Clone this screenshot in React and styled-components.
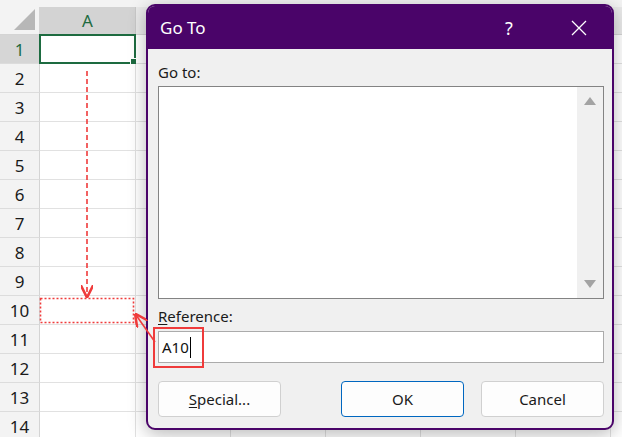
import React from "react";
import styled, { createGlobalStyle } from "styled-components";

const GlobalStyle = createGlobalStyle`
  html, body {
    margin: 0;
    padding: 0;
    background: #ffffff;
    overflow: hidden;
  }
  * {
    box-sizing: border-box;
  }
`;

const Page = styled.div`
  position: relative;
  width: 622px;
  height: 437px;
  overflow: hidden;
  background: #ffffff;
  font-family: "Noto Sans", "Open Sans", sans-serif;
`;

const TopStrip = styled.div`
  height: 7px;
  background: #f3f3f3;
`;

const Sheet = styled.div`
  display: grid;
  grid-template-columns: 40px 96px repeat(6, 95px);
  grid-template-rows: 28px repeat(14, 29px);
`;

const Corner = styled.div`
  position: relative;
  background: #f3f3f3;
  border-right: 1px solid #d4d4d4;
  border-bottom: 1px solid #d4d4d4;
  &::after {
    content: "";
    position: absolute;
    right: 4px;
    bottom: 4px;
    width: 0;
    height: 0;
    border-left: 21px solid transparent;
    border-bottom: 21px solid #b7b7b7;
  }
`;

const ColHead = styled.div`
  display: flex;
  align-items: center;
  justify-content: center;
  background: ${({ active }) => (active ? "#d3d3d3" : "#e9e9e9")};
  color: ${({ active }) => (active ? "#1d6b40" : "#333")};
  border-right: 1px solid #c8c8c8;
  border-bottom: 1px solid ${({ active }) => (active ? "#1d6b40" : "#d4d4d4")};
  font-size: 17px;
`;

const RowHead = styled.div`
  display: flex;
  align-items: center;
  justify-content: center;
  background: ${({ active }) => (active ? "#d6d6d6" : "#f3f3f3")};
  color: ${({ active }) => (active ? "#1d6b40" : "#1a1a1a")};
  border-right: 1px solid ${({ active }) => (active ? "#1d6b40" : "#d4d4d4")};
  border-bottom: 1px solid #dcdcdc;
  font-size: 17px;
`;

const Cell = styled.div`
  position: relative;
  background: #ffffff;
  border-right: 1px solid #e1e1e1;
  border-bottom: 1px solid #e1e1e1;
  ${({ selected }) =>
    selected &&
    `
    border: 2px solid #1d6b40;
    margin: -1px 0 0 -1px;
    &::after {
      content: "";
      position: absolute;
      right: -5px;
      bottom: -5px;
      width: 7px;
      height: 7px;
      background: #1d6b40;
      border: 1px solid #fff;
    }
  `}
`;

const Dialog = styled.div`
  position: absolute;
  left: 146px;
  top: 4px;
  width: 468px;
  height: 426px;
  border: 2px solid #4a0469;
  border-radius: 9px;
  overflow: hidden;
  background: #f0f0f0;
  box-shadow: 0 4px 18px rgba(0, 0, 0, 0.28);
  display: flex;
  flex-direction: column;
`;

const TitleBar = styled.div`
  height: 43px;
  background: #4a0469;
  color: #ffffff;
  display: flex;
  align-items: center;
  padding-left: 12px;
`;

const Title = styled.div`
  flex: 1;
  font-size: 17px;
`;

const TitleButton = styled.div`
  width: ${({ w }) => w}px;
  height: 43px;
  display: flex;
  align-items: center;
  justify-content: center;
  font-size: 18px;
  color: #ffffff;
`;

const Body = styled.div`
  flex: 1;
  display: flex;
  flex-direction: column;
  padding: 12px 8px 0 10px;
`;

const Label = styled.div`
  font-size: 15px;
  line-height: 22px;
  color: #1a1a1a;
  margin-top: ${({ top }) => top || 0}px;
  margin-bottom: ${({ bottom }) => bottom || 0}px;
`;

const Key = styled.span`
  text-decoration: underline;
  text-underline-offset: 2px;
`;

const ListBox = styled.div`
  height: 213px;
  background: #ffffff;
  border: 1px solid #838383;
  display: flex;
  justify-content: flex-end;
`;

const ScrollBar = styled.div`
  width: 26px;
  background: #f0f0f0;
  display: flex;
  flex-direction: column;
  justify-content: space-between;
  align-items: center;
  padding: 10px 0 10px;
`;

const Arrow = styled.div`
  width: 0;
  height: 0;
  border-left: 6px solid transparent;
  border-right: 6px solid transparent;
  ${({ down }) =>
    down
      ? "border-top: 8px solid #a3a3a3;"
      : "border-bottom: 8px solid #a3a3a3;"}
`;

const Input = styled.div`
  height: 32px;
  background: #ffffff;
  border: 1px solid #ababab;
  display: flex;
  align-items: center;
  padding-left: 3px;
  font-size: 15px;
  color: #111;
`;

const Caret = styled.span`
  display: inline-block;
  width: 1px;
  height: 21px;
  background: #000;
  margin-left: 1px;
`;

const Buttons = styled.div`
  display: flex;
  gap: 17px;
  margin-top: 18px;
`;

const Button = styled.div`
  width: 123px;
  height: 36px;
  display: flex;
  align-items: center;
  justify-content: center;
  border-radius: 4px;
  background: #fdfdfd;
  border: 1px solid ${({ primary }) => (primary ? "#0067c0" : "#d0d0d0")};
  font-size: 15px;
  color: #1a1a1a;
  margin-right: ${({ push }) => (push ? "auto" : "0")};
`;

const Overlay = styled.svg`
  position: absolute;
  left: 0;
  top: 0;
  pointer-events: none;
`;

const RED = "#ef3b3b";
const cols = ["A", "B", "C", "D", "E", "F", "G"];
const rows = Array.from({ length: 14 }, (_, i) => i + 1);

export default function App() {
  return (
    <Page>
      <GlobalStyle />
      <TopStrip />
      <Sheet>
        <Corner />
        {cols.map((c) => (
          <ColHead key={c} active={c === "A"}>
            {c === "A" ? c : ""}
          </ColHead>
        ))}
        {rows.map((r) => (
          <React.Fragment key={r}>
            <RowHead active={r === 1}>{r}</RowHead>
            {cols.map((c) => (
              <Cell key={c} selected={r === 1 && c === "A"} />
            ))}
          </React.Fragment>
        ))}
      </Sheet>

      <Dialog>
        <TitleBar>
          <Title>Go To</Title>
          <TitleButton w={74}>?</TitleButton>
          <TitleButton w={66}>
            <svg width="16" height="16" viewBox="0 0 16 16">
              <path d="M1 1 L15 15 M15 1 L1 15" stroke="#fff" strokeWidth="1.3" />
            </svg>
          </TitleButton>
        </TitleBar>
        <Body>
          <Label bottom={3}>Go to:</Label>
          <ListBox>
            <ScrollBar>
              <Arrow />
              <Arrow down />
            </ScrollBar>
          </ListBox>
          <Label top={6} bottom={4}>
            <Key>R</Key>eference:
          </Label>
          <Input>
            A10
            <Caret />
          </Input>
          <Buttons>
            <Button push>
              <Key>S</Key>pecial...
            </Button>
            <Button primary>OK</Button>
            <Button>Cancel</Button>
          </Buttons>
        </Body>
      </Dialog>

      <Overlay width="622" height="437" viewBox="0 0 622 437">
        <defs>
          <marker id="head" markerWidth="8" markerHeight="8" refX="7" refY="4" orient="auto">
            <path d="M0 0 L8 4 L0 8" fill="none" stroke={RED} strokeWidth="1.6" />
          </marker>
        </defs>
        <line
          x1="87"
          y1="71"
          x2="87"
          y2="296"
          stroke={RED}
          strokeWidth="1.6"
          strokeDasharray="5 3"
          markerEnd="url(#head)"
        />
        <rect
          x="40.5"
          y="298.5"
          width="93"
          height="24"
          fill="none"
          stroke={RED}
          strokeWidth="1.6"
          strokeDasharray="2 2"
        />
        <line
          x1="155"
          y1="342"
          x2="136"
          y2="315"
          stroke={RED}
          strokeWidth="1.6"
          markerEnd="url(#head)"
        />
        <rect x="154" y="328" width="49" height="39" fill="none" stroke={RED} strokeWidth="2" />
      </Overlay>
    </Page>
  );
}
